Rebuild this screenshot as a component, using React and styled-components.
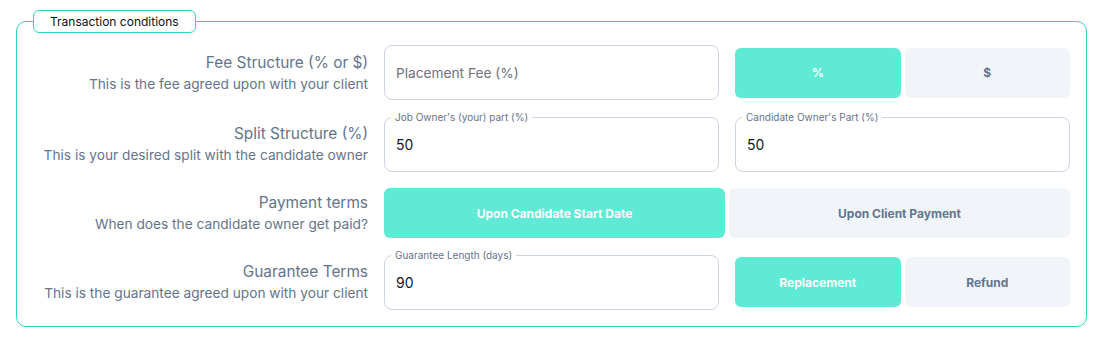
import React, { useState } from 'react';
import styled, { createGlobalStyle } from 'styled-components';

const GlobalStyle = createGlobalStyle`
  * { box-sizing: border-box; }
  body {
    margin: 0;
    background: #fff;
    font-family: Inter, "Noto Sans", "Liberation Sans", sans-serif;
    color: #0f172a;
  }
`;

const Page = styled.div`
  padding: 10px 19px 14px 16px;
`;

const Section = styled.fieldset`
  margin: 0;
  padding: 12px 16px 16px;
  border: 1px solid #2dd4bf;
  border-radius: 10px;
  min-width: 0;
`;

const Legend = styled.legend`
  padding: 0 16px;
  height: 23px;
  line-height: 21px;
  font-size: 12px;
  color: #111;
  border: 1px solid #2dd4bf;
  border-radius: 6px;
  background: #fff;
`;

const Grid = styled.div`
  display: grid;
  grid-template-columns: repeat(3, 1fr);
  column-gap: 16px;
  row-gap: 16.5px;
`;

const LabelCell = styled.div`
  display: flex;
  flex-direction: column;
  justify-content: center;
  align-items: flex-end;
  text-align: right;
  color: #64748b;
`;

const Title = styled.div`
  font-size: 15.4px;
  line-height: 22px;
`;

const Hint = styled.div`
  font-size: 13.7px;
  line-height: 20px;
`;

const Field = styled.div`
  position: relative;
  height: 55px;
  border: 1px solid #cbd5e1;
  border-radius: 8px;
  display: flex;
  align-items: center;
  padding: 0 11px;
`;

const FloatLabel = styled.span`
  position: absolute;
  top: -7px;
  left: 6px;
  padding: 0 4px;
  background: #fff;
  font-size: 10px;
  line-height: 12px;
  color: #64748b;
`;

const Input = styled.input`
  width: 100%;
  padding: 0;
  border: 0;
  outline: none;
  background: transparent;
  font-family: inherit;
  font-size: 14px;
  color: #111827;
  &::placeholder {
    color: #6b7280;
    font-size: 13.7px;
  }
`;

const Toggle = styled.div`
  display: grid;
  grid-template-columns: 1fr 1fr;
  gap: 4px;
  align-self: center;
  grid-column: ${(p) => p.$span || 'auto'};
`;

const Option = styled.button`
  height: 50px;
  border: 0;
  border-radius: 6px;
  font-family: inherit;
  font-size: 12px;
  font-weight: 700;
  cursor: pointer;
  background: ${(p) => (p.$active ? '#5eead4' : '#f1f5f9')};
  color: ${(p) => (p.$active ? '#fff' : '#64748b')};
`;

function Label({ title, hint }) {
  return (
    <LabelCell>
      <Title>{title}</Title>
      <Hint>{hint}</Hint>
    </LabelCell>
  );
}

function TextField({ label, value, placeholder, onChange }) {
  return (
    <Field>
      {label && <FloatLabel>{label}</FloatLabel>}
      <Input value={value} placeholder={placeholder} onChange={onChange} />
    </Field>
  );
}

function ToggleGroup({ options, value, onChange, span }) {
  return (
    <Toggle $span={span}>
      {options.map((o) => (
        <Option key={o} $active={o === value} onClick={() => onChange(o)}>
          {o}
        </Option>
      ))}
    </Toggle>
  );
}

export default function App() {
  const [feeType, setFeeType] = useState('%');
  const [fee, setFee] = useState('');
  const [ownerPart, setOwnerPart] = useState('50');
  const [candPart, setCandPart] = useState('50');
  const [terms, setTerms] = useState('Upon Candidate Start Date');
  const [days, setDays] = useState('90');
  const [guarantee, setGuarantee] = useState('Replacement');

  return (
    <Page>
      <GlobalStyle />
      <Section>
        <Legend>Transaction conditions</Legend>
        <Grid>
          <Label title="Fee Structure (% or $)" hint="This is the fee agreed upon with your client" />
          <TextField
            placeholder="Placement Fee (%)"
            value={fee}
            onChange={(e) => setFee(e.target.value)}
          />
          <ToggleGroup options={['%', '$']} value={feeType} onChange={setFeeType} />

          <Label title="Split Structure (%)" hint="This is your desired split with the candidate owner" />
          <TextField
            label="Job Owner's (your) part (%)"
            value={ownerPart}
            onChange={(e) => setOwnerPart(e.target.value)}
          />
          <TextField
            label="Candidate Owner's Part (%)"
            value={candPart}
            onChange={(e) => setCandPart(e.target.value)}
          />

          <Label title="Payment terms" hint="When does the candidate owner get paid?" />
          <ToggleGroup
            span="span 2"
            options={['Upon Candidate Start Date', 'Upon Client Payment']}
            value={terms}
            onChange={setTerms}
          />

          <Label title="Guarantee Terms" hint="This is the guarantee agreed upon with your client" />
          <TextField
            label="Guarantee Length (days)"
            value={days}
            onChange={(e) => setDays(e.target.value)}
          />
          <ToggleGroup
            options={['Replacement', 'Refund']}
            value={guarantee}
            onChange={setGuarantee}
          />
        </Grid>
      </Section>
    </Page>
  );
}
